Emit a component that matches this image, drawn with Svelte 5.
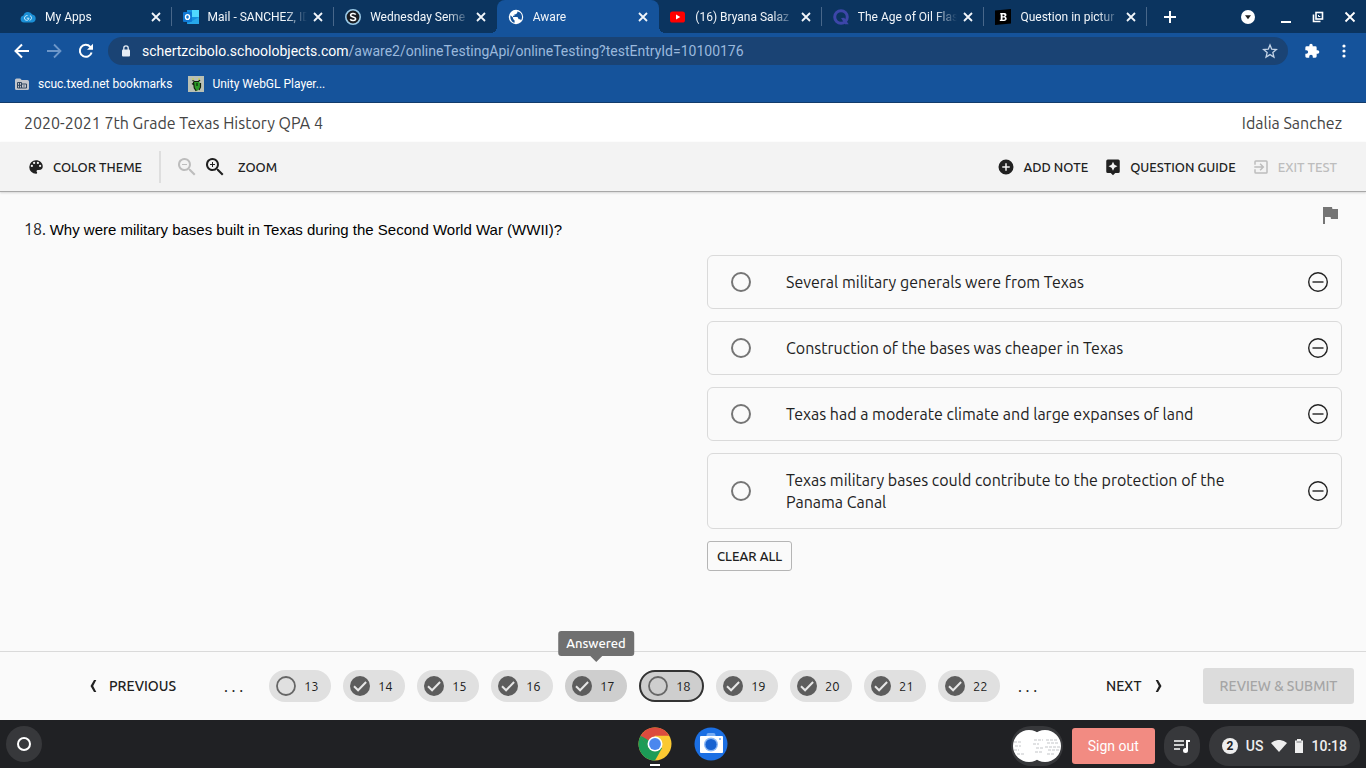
<script lang="ts">
  interface Tab {
    icon: string;
    title: string;
    active?: boolean;
  }

  const tabs: Tab[] = [
    { icon: 'cloud', title: 'My Apps' },
    { icon: 'outlook', title: 'Mail - SANCHEZ, ID' },
    { icon: 'schoology', title: 'Wednesday Seme' },
    { icon: 'globe', title: 'Aware', active: true },
    { icon: 'youtube', title: '(16) Bryana Salaz' },
    { icon: 'quizlet', title: 'The Age of Oil Flas' },
    { icon: 'brainly', title: 'Question in pictur' },
  ];

  const options = [
    'Several military generals were from Texas',
    'Construction of the bases was cheaper in Texas',
    'Texas had a moderate climate and large expanses of land',
    'Texas military bases could contribute to the protection of the Panama Canal',
  ];

  const questions = [13, 14, 15, 16, 17, 18, 19, 20, 21, 22];
  const unanswered = [13, 18];
  const hovered = 17;

  let current = $state(18);
  let answer = $state('');
</script>

<div class="screen">
  <header class="browser">
    <div class="tab-strip">
      <div class="tabs">
        {#each tabs as tab}
          <div class="tab" class:active={tab.active}>
            <svg class="favicon" viewBox="0 0 16 16" aria-hidden="true">
              {#if tab.icon === 'cloud'}
                <path d="M4 13.500a3.600 3.600 0 0 1-.6-7.100A4.800 4.800 0 0 1 12.300 5.600a4 4 0 0 1 0 7.900z" fill="#1b8fd6" />
                <path d="M7.500 6.500c-2 0-3 1.300-3 2.600s.9 2.200 2.200 2.200 2-.8 2.200-1.800M6.800 9.200h2.400M9.600 11.300c2.400-.5 2.600-4.400.3-4.400" fill="none" stroke="#d5efff" stroke-width="1" />
              {:else if tab.icon === 'outlook'}
                <rect x="4" y="1" width="12" height="14" fill="#1490df" />
                <rect x="9" y="1" width="7" height="7" fill="#50d9ff" />
                <path d="M4 15h12V8z" fill="#28a8ea" />
                <rect x="0" y="3" width="9" height="10" rx="1" fill="#0f78d4" />
                <ellipse cx="4.500" cy="8" rx="2" ry="2.400" fill="none" stroke="#fff" stroke-width="1.400" />
              {:else if tab.icon === 'schoology'}
                <circle cx="8" cy="8" r="7.200" fill="#1a1d22" stroke="#9bcbe9" stroke-width="1.600" />
                <path d="M10.700 5.600C9.600 3.800 5.600 4.200 5.600 6.200c0 2.100 5 1.400 5 3.600 0 2.200-4 2.300-5.400.5" fill="none" stroke="#fff" stroke-width="1.600" />
              {:else if tab.icon === 'globe'}
                <circle cx="8" cy="8" r="7.200" fill="#fff" />
                <path d="M2.500 6.200l2.600 2.600v1.300l1.500 1.300v2.400C3.800 13.200 1.800 10 2.500 6.200zM9.300 2.400v1.400L8 5.200H6.500v1.500H5v1.400h4.500l1.200 2.200h1.500l.8 1.200c1.400-2 1.500-5.600-.4-7.500-.8-.9-2-1.500-3.300-1.600z" fill="#15539b" />
              {:else if tab.icon === 'youtube'}
                <rect x="0" y="2.500" width="15" height="11" rx="2.600" fill="#f00" />
                <path d="M6 5.500v5L10.300 8z" fill="#fff" />
              {:else if tab.icon === 'quizlet'}
                <circle cx="8" cy="8" r="6.300" fill="none" stroke="#3d46a9" stroke-width="3" />
                <path d="M8 9l3.200-.2 4.500 6.500h-3.700z" fill="#3d46a9" />
              {:else}
                <path d="M0 1.500L16 0v14.500L0 16z" fill="#000" />
                <path d="M5.500 4h4c2.600 0 2.500 3.300.5 3.800 2.500.4 2.300 4.200-.8 4.200H4.800v-1.300h.9V5.300h-.9zM7.500 5.400v1.800h1.300c1 0 1-1.800 0-1.800zM7.500 8.600v2.100h1.600c1.100 0 1.100-2.100 0-2.100z" fill="#fff" />
              {/if}
            </svg>
            <span class="tab-title">{tab.title}</span>
            <button class="tab-close" aria-label="Close tab">
              <svg width="10" height="10" viewBox="0 0 10 10"><path d="M1 1l8 8M9 1L1 9" stroke="currentColor" stroke-width="1.800" /></svg>
            </button>
          </div>
        {/each}
      </div>
      <div class="window-controls">
        <button class="new-tab" aria-label="New tab">
          <svg width="12" height="12" viewBox="0 0 12 12"><path d="M6 0v12M0 6h12" stroke="currentColor" stroke-width="2" /></svg>
        </button>
        <button aria-label="Search tabs">
          <svg width="14" height="14" viewBox="0 0 14 14"><circle cx="7" cy="7" r="7" fill="#fff" /><path d="M4 5.200h6L7 9.300z" fill="#202020" /></svg>
        </button>
        <button aria-label="Minimize">
          <svg width="12" height="12" viewBox="0 0 12 12"><path d="M1 11h10" stroke="currentColor" stroke-width="2" /></svg>
        </button>
        <button aria-label="Restore">
          <svg width="12" height="12" viewBox="0 0 12 12" fill="none" stroke="currentColor" stroke-width="1.600"><rect x="4" y="1.500" width="6.500" height="6.500" /><path d="M1.500 3.500v7h7" /><path d="M6.500 4v1.500H8.300" stroke-width="1" /></svg>
        </button>
        <button aria-label="Close window">
          <svg width="12" height="12" viewBox="0 0 12 12"><path d="M1.500 1.500l9 9M10.500 1.500l-9 9" stroke="currentColor" stroke-width="1.800" /></svg>
        </button>
      </div>
    </div>

    <div class="address-row">
      <button aria-label="Back">
        <svg width="16" height="16" viewBox="0 0 16 16"><path d="M15 8H2M8 1.500L1.500 8 8 14.500" fill="none" stroke="#fff" stroke-width="2" /></svg>
      </button>
      <button aria-label="Forward" disabled>
        <svg width="16" height="16" viewBox="0 0 16 16"><path d="M1 8h13M8 1.500L14.500 8 8 14.500" fill="none" stroke="#6d97c9" stroke-width="1.800" /></svg>
      </button>
      <button aria-label="Reload">
        <svg width="16" height="16" viewBox="0 0 16 16"><path d="M13.600 9.500A6 6 0 1 1 12.300 3.800L14 5.500" fill="none" stroke="#fff" stroke-width="2" /><path d="M15 .8v6H9z" fill="#fff" /></svg>
      </button>
      <div class="address">
        <svg width="10" height="12" viewBox="0 0 10 12" aria-hidden="true"><rect x="1" y="4.500" width="8" height="7" rx="1" fill="#e6edf5" /><path d="M2.800 5V3a2.200 2.200 0 0 1 4.400 0v2" fill="none" stroke="#e6edf5" stroke-width="1.300" /></svg>
        <a class="url" href="#test">schertzcibolo.schoolobjects.com<span>/aware2/onlineTestingApi/onlineTesting?testEntryId=10100176</span></a>
        <button aria-label="Bookmark this page">
          <svg width="16" height="16" viewBox="0 0 24 24"><path d="M12 3l2.600 6.200 6.900.6-5.200 4.500 1.600 6.700-5.900-3.600L6.100 21l1.600-6.700L2.500 9.800l6.900-.6z" fill="none" stroke="#c3d3e6" stroke-width="2" /></svg>
        </button>
      </div>
      <button aria-label="Extensions">
        <svg width="16" height="16" viewBox="0 0 24 24"><path d="M20.500 11H19V7a2 2 0 0 0-2-2h-4V3.500a2.500 2.500 0 0 0-5 0V5H4a2 2 0 0 0-2 2v3.800h1.500a2.700 2.700 0 0 1 0 5.400H2V20a2 2 0 0 0 2 2h3.800v-1.500a2.700 2.700 0 0 1 5.400 0V22H17a2 2 0 0 0 2-2v-4h1.500a2.500 2.500 0 0 0 0-5z" fill="#fff" /></svg>
      </button>
      <button aria-label="Browser menu">
        <svg width="16" height="16" viewBox="0 0 16 16" fill="#fff"><circle cx="8" cy="3" r="1.600" /><circle cx="8" cy="8" r="1.600" /><circle cx="8" cy="13" r="1.600" /></svg>
      </button>
    </div>

    <nav class="bookmarks" aria-label="Bookmarks">
      <a href="#bookmarks">
        <svg width="16" height="16" viewBox="0 0 16 16" aria-hidden="true"><path d="M1 4a1.500 1.500 0 0 1 1.500-1.500h3.700L7.700 4h5.800A1.500 1.500 0 0 1 15 5.500v7a1.500 1.500 0 0 1-1.500 1.500h-11A1.500 1.500 0 0 1 1 12.500z" fill="#c2c6cc" /><path d="M3.500 6.500h4v5.500h-4zM7.500 8h5v4h-5zM3.500 9.300h4M5.500 6.500V12M10 9.300v1.400" fill="none" stroke="#31465f" stroke-width="1" /></svg>
        scuc.txed.net bookmarks
      </a>
      <a href="#unity">
        <svg width="16" height="16" viewBox="0 0 16 16" aria-hidden="true"><rect width="16" height="16" fill="#b9c0b4" /><path d="M6 5h4l2 2v4l-2 3.500H7.500L6 12z" fill="#2a9a27" /><path d="M4.500 4.500l2 1h4l1.500-1.500M5.500 6l.8 6 2 3M9 7v3M4 7.500l1.500 1M12.500 7v4l-1.500 3" fill="none" stroke="#10200c" stroke-width="1.200" /><path d="M5 2v2M11 2v2" stroke="#cbd43b" stroke-width="1" /></svg>
        Unity WebGL Player...
      </a>
    </nav>
  </header>

  <div class="title-bar">
    <h1>2020-2021 7th Grade Texas History QPA 4</h1>
    <span>Idalia Sanchez</span>
  </div>

  <div class="tools">
    <button class="tool">
      <svg width="18" height="18" viewBox="0 0 24 24" fill="currentColor"><path d="M12 3a9 9 0 0 0 0 18c.8 0 1.500-.7 1.500-1.500 0-.4-.2-.7-.4-1a1.500 1.500 0 0 1 1.100-2.500H16a5 5 0 0 0 5-5c0-4.400-4-8-9-8zm-5.500 9a1.500 1.500 0 1 1 0-3 1.500 1.500 0 0 1 0 3zm3-4a1.500 1.500 0 1 1 0-3 1.500 1.500 0 0 1 0 3zm5 0a1.500 1.500 0 1 1 0-3 1.500 1.500 0 0 1 0 3zm3 4a1.500 1.500 0 1 1 0-3 1.500 1.500 0 0 1 0 3z" /></svg>
      COLOR THEME
    </button>
    <div class="zoom">
      <button disabled aria-label="Zoom out">
        <svg width="24" height="24" viewBox="0 0 24 24" fill="currentColor"><path d="M15.500 14h-.8l-.3-.3A6.500 6.500 0 1 0 13.700 14.400l.3.300v.8l5 5 1.500-1.500zm-6 0a4.500 4.500 0 1 1 0-9 4.500 4.500 0 0 1 0 9zM7 9h5v1H7z" /></svg>
      </button>
      <button aria-label="Zoom in">
        <svg width="24" height="24" viewBox="0 0 24 24" fill="currentColor"><path d="M15.500 14h-.8l-.3-.3A6.500 6.500 0 1 0 13.700 14.400l.3.300v.8l5 5 1.500-1.500zm-6 0a4.500 4.500 0 1 1 0-9 4.500 4.500 0 0 1 0 9zM7 9h2V7h1v2h2v1h-2v2H9v-2H7z" /></svg>
      </button>
      <span>ZOOM</span>
    </div>
    <div class="tools-right">
      <button class="tool">
        <svg width="18" height="18" viewBox="0 0 24 24" fill="currentColor"><path d="M12 2a10 10 0 1 0 0 20 10 10 0 0 0 0-20zm5 11h-4v4h-2v-4H7v-2h4V7h2v4h4z" /></svg>
        ADD NOTE
      </button>
      <button class="tool">
        <svg width="18" height="18" viewBox="0 0 24 24" fill="currentColor"><path d="M19 2H5a2 2 0 0 0-2 2v14a2 2 0 0 0 2 2h4l3 3 3-3h4a2 2 0 0 0 2-2V4a2 2 0 0 0-2-2zm-5.100 10.900L12 17l-1.900-4.100L6 11l4.100-1.900L12 5l1.900 4.100L18 11z" /></svg>
        QUESTION GUIDE
      </button>
      <button class="tool" disabled>
        <svg width="18" height="18" viewBox="0 0 24 24" fill="currentColor"><path d="M10.100 15.600L11.500 17l5-5-5-5-1.400 1.400L12.700 11H3v2h9.700zM19 3H5a2 2 0 0 0-2 2v4h2V5h14v14H5v-4H3v4a2 2 0 0 0 2 2h14a2 2 0 0 0 2-2V5a2 2 0 0 0-2-2z" /></svg>
        EXIT TEST
      </button>
    </div>
  </div>

  <main>
    <p class="question" id="question">18. <span>Why were military bases built in Texas during the Second World War (WWII)?</span></p>
    <div class="answers">
      <button class="flag" aria-label="Flag question">
        <svg width="24" height="24" viewBox="0 0 24 24"><path d="M14.400 6L14 4H5v17h2v-7h5.600l.4 2h7V6z" fill="#757575" /></svg>
      </button>
      <div class="options" role="radiogroup" aria-labelledby="question">
        {#each options as option, i}
          <div class="option">
            <input type="radio" id="option-{i}" name="answer" value={option} bind:group={answer} />
            <label for="option-{i}">{option}</label>
            <button aria-label="Eliminate answer">
              <svg width="22" height="22" viewBox="0 0 22 22" fill="none" stroke="#222" stroke-width="1.400"><circle cx="11" cy="11" r="9.300" /><path d="M5.500 11h11" /></svg>
            </button>
          </div>
        {/each}
      </div>
      <button class="clear" onclick={() => (answer = '')}>CLEAR ALL</button>
    </div>
  </main>

  <footer>
    <button class="step previous">
      <svg width="8" height="14" viewBox="0 0 8 14"><path d="M5 1h2.300L4.200 7l3.100 6H5L1.500 7z" fill="currentColor" /></svg>
      PREVIOUS
    </button>
    <nav aria-label="Questions">
      <span class="dots">. . .</span>
      {#each questions as number}
        <button class="chip" class:current={number === current} class:hovered={number === hovered} onclick={() => (current = number)}>
          <svg width="22" height="22" viewBox="0 0 22 22" aria-hidden="true">
            {#if unanswered.includes(number)}
              <circle cx="11" cy="11" r="9" fill="none" stroke="#666" stroke-width="1.800" />
            {:else}
              <circle cx="11" cy="11" r="10" fill="#5d5d5d" />
              <path d="M5 11.200l4.100 4.100 8-8.300" fill="none" stroke="#e6e6e6" stroke-width="2" />
            {/if}
          </svg>
          {number}
          {#if number === hovered}
            <span class="tooltip" role="tooltip">Answered</span>
          {/if}
        </button>
      {/each}
      <span class="dots">. . .</span>
    </nav>
    <button class="step next">
      NEXT
      <svg width="8" height="14" viewBox="0 0 8 14"><path d="M3 1H.7l3.100 6-3.100 6H3l3.500-6z" fill="currentColor" /></svg>
    </button>
    <button class="submit" disabled>REVIEW &amp; SUBMIT</button>
  </footer>

  <div class="shelf">
    <button class="round launcher" aria-label="Launcher">
      <svg width="16" height="16" viewBox="0 0 16 16"><circle cx="8" cy="8" r="6" fill="none" stroke="#fff" stroke-width="2" /></svg>
    </button>
    <div class="apps">
      <button class="running" aria-label="Chrome">
        <svg width="34" height="34" viewBox="0 0 34 34">
          <circle cx="17" cy="17" r="16.500" fill="#fbc932" />
          <path d="M17 17L2.700 8.800A16.500 16.500 0 0 0 17 33.500l7.100-12.400z" fill="#1c9c57" />
          <path d="M2.700 8.800A16.500 16.500 0 0 1 31.300 8.800H17L10 21z" fill="#dc4b3e" />
          <path d="M2.700 8.800l7.200 12.400L17 17z" fill="#1c9c57" />
          <circle cx="17" cy="17" r="7.500" fill="#fff" />
          <circle cx="17" cy="17" r="5.900" fill="#4b87ee" />
        </svg>
      </button>
      <button aria-label="Camera">
        <svg width="34" height="34" viewBox="0 0 34 34">
          <circle cx="17" cy="17" r="16.500" fill="#1b6fe3" />
          <rect x="12.500" y="6" width="9" height="5" rx="2" fill="#79adf4" />
          <rect x="6" y="9" width="23" height="17" rx="1" fill="#fff" />
          <circle cx="17" cy="17.500" r="7" fill="#8bb8f6" />
          <circle cx="17" cy="17.500" r="5.600" fill="#1762d1" />
          <circle cx="26" cy="12" r="1" fill="#70a5ef" />
        </svg>
      </button>
    </div>
    <div class="tray">
      <button class="preview" aria-label="Recent files">
        <svg width="52" height="40" viewBox="0 0 52 40">
          <rect width="52" height="40" rx="20" fill="#37383b" />
          <circle cx="18" cy="20" r="16" fill="#fff" /><circle cx="34" cy="20" r="16" fill="#fff" />
          <path d="M3 16h7M4 20h6M3 24h5M6 28h7M23 14h9M22 18h6M25 22h7M24 26h7M35 14h11M36 17h12M34 21h15M37 24h11M36 28h8" stroke="#c3c5c8" stroke-width="1" stroke-dasharray="3 1" />
        </svg>
      </button>
      <button class="sign-out">Sign out</button>
      <button class="round media" aria-label="Media controls">
        <svg width="20" height="20" viewBox="0 0 20 20"><path d="M2 5h10M2 9h10M2 13h6" stroke="#fff" stroke-width="1.600" /><path d="M15 15V5h3" fill="none" stroke="#fff" stroke-width="2" /><circle cx="13.500" cy="14.500" r="2.500" fill="#fff" /></svg>
      </button>
      <button class="status">
        <span class="count">2</span>
        <span>US</span>
        <svg width="16" height="12" viewBox="0 0 16 12" aria-hidden="true"><path d="M0 3a12 12 0 0 1 16 0L8 12z" fill="#eee" /></svg>
        <svg width="8" height="14" viewBox="0 0 8 14" aria-hidden="true"><path d="M2 0h4v1.500h2V14H0V1.500h2z" fill="#eee" /><path d="M1.500 3h5" stroke="#77797c" stroke-width="1" /></svg>
        <span>10:18</span>
      </button>
    </div>
  </div>
</div>

<style>
  :global(body) { margin: 0; }
  * { box-sizing: border-box; }
  button {
    display: flex; align-items: center; justify-content: center;
    padding: 0; border: 0; background: none; color: inherit; font: inherit; white-space: nowrap;
  }
  svg { display: block; flex-shrink: 0; }
  a { color: inherit; text-decoration: none; }

  .screen {
    min-height: 100vh; display: flex; flex-direction: column;
    background: #fafafa; color: #212121; font: 16px/22px Ubuntu, "Noto Sans", sans-serif;
  }

  .browser { background: #15539b; color: #fff; border-bottom: 1px solid #123b6b; font: 12px/16px Roboto, sans-serif; }
  .tab-strip { display: flex; height: 33px; background: #0b345f; }
  .tabs { flex: 1; min-width: 0; display: grid; grid-template-columns: repeat(7, 1fr); padding-left: 9px; }
  .tab {
    position: relative; display: flex; align-items: center; min-width: 0;
    padding: 0 11px; color: #f2f6fa;
  }
  .tab:not(.active):not(:has(+ .active))::before {
    content: ''; position: absolute; right: 0; top: 7px; width: 1px; height: 19px; background: #48678a;
  }
  .tab.active { background: #15539b; border-radius: 8px 8px 0 0; }
  .tab.active::before, .tab.active::after {
    content: ''; position: absolute; bottom: 0; width: 6px; height: 6px;
  }
  .tab.active::before { left: -6px; background: radial-gradient(circle at 0 0, #0b345f 6px, #15539b 6px); }
  .tab.active::after { right: -6px; background: radial-gradient(circle at 100% 0, #0b345f 6px, #15539b 6px); }
  .favicon { width: 16px; height: 16px; margin-right: 9px; }
  .tab-title {
    flex: 1; min-width: 0; white-space: nowrap;
    mask-image: linear-gradient(to right, #000 76%, transparent 98%);
  }
  .tab-close { margin-left: 4px; }
  .window-controls { width: 219px; flex-shrink: 0; display: flex; align-items: center; gap: 20px; padding: 0 10px 0 17px; }
  .new-tab { margin-right: auto; }
  .new-tab + button { margin-right: 5px; }

  .address-row { display: flex; align-items: center; gap: 16px; height: 36px; padding: 0 14px; }
  .address {
    flex: 1; min-width: 0; display: flex; align-items: center; gap: 11px; height: 28px; margin-left: -2px;
    padding: 0 10px 0 13px; border-radius: 14px; background: #1a4374; font-size: 14px;
  }
  .url { flex: 1; min-width: 0; overflow: hidden; white-space: nowrap; }
  .url span { color: #9ab9dd; }
  .bookmarks { display: flex; align-items: center; gap: 16px; height: 33px; padding: 0 14px 3px; }
  .bookmarks a { display: flex; align-items: center; gap: 8px; }

  .title-bar {
    display: flex; align-items: center; justify-content: space-between;
    height: 39px; padding: 0 24px; background: #fff; color: #444;
  }
  h1 { margin: 0; font-size: inherit; font-weight: 400; }
  .tools {
    display: flex; align-items: center; height: 50px; padding: 0 29px 0 27px;
    background: #f3f3f3; border-bottom: 1px solid #a8a8a8; box-shadow: 0 1px 2px #d5d5d5;
    font-size: 13px; font-weight: 500;
  }
  .tool { gap: 8px; }
  .tools button:disabled { color: #bdbdbd; }
  .zoom { display: flex; align-items: center; gap: 4px; margin-left: 17px; padding-left: 14px; border-left: 2px solid #dedede; height: 32px; }
  .zoom span { margin-left: 7px; }
  .tools-right { display: flex; gap: 16px; margin-left: auto; }

  main { flex: 1; display: grid; grid-template-columns: 1fr 1fr; gap: 48px; padding: 11px 24px 24px; }
  .question { margin: 0; padding-top: 15px; }
  .question span { font: 15px/22px "Liberation Sans", Arial, sans-serif; color: #000; }
  .answers { display: flex; flex-direction: column; align-items: flex-start; }
  .flag { align-self: flex-end; margin-bottom: 28px; }
  .options { display: grid; gap: 12px; width: 100%; }
  .option { display: flex; align-items: center; padding: 15px 12px 15px 23px; border: 1px solid #dadada; border-radius: 6px; }
  .option input { appearance: none; flex-shrink: 0; width: 20px; height: 20px; margin: 0 35px 0 0; border: 2px solid #757575; border-radius: 50%; }
  .option input:checked { background: radial-gradient(#757575 5px, transparent 6px); }
  .option label { flex: 1; margin-right: 40px; }
  .clear { height: 30px; margin-top: 12px; padding: 0 9px; border: 1px solid #b5b5b5; border-radius: 3px; font-size: 13px; font-weight: 500; }

  footer { display: flex; align-items: center; height: 69px; padding-right: 12px; border-top: 1px solid #dadada; }
  .step { gap: 12px; font-size: 14px; font-weight: 500; }
  .previous { width: 224px; padding-right: 48px; justify-content: flex-end; }
  .next { width: 57px; margin-left: auto; margin-right: 40px; justify-content: space-between; }
  footer nav { display: flex; align-items: center; gap: 12px; }
  .dots { width: 33px; }
  .dots:last-child { padding-left: 6px; }
  .chip {
    position: relative; width: 62px; height: 32px; gap: 7px; padding-left: 6px; justify-content: flex-start;
    border-radius: 16px; background: #e0e0e0; font-size: 13px;
  }
  .chip.hovered { background: #cecece; }
  .chip.current { width: 65px; border: 2px solid #333; background: #cecece; }
  .tooltip {
    position: absolute; left: 50%; bottom: 46px; transform: translateX(-50%);
    padding: 2px 8px; border-radius: 3px; background: #707070; color: #fff; font-size: 13px; line-height: 21px; font-weight: 500;
  }
  .tooltip::after {
    content: ''; position: absolute; left: 50%; top: 100%; margin-left: -6px;
    border: 6px solid transparent; border-top-color: #707070;
  }
  .submit { height: 36px; width: 151px; border-radius: 3px; background: #dcdcdc; color: #a5a5a5; font-size: 14px; font-weight: 500; }

  .shelf {
    display: grid; grid-template-columns: 1fr auto 1fr; align-items: center;
    height: 48px; padding: 0 6px; background: #202124; color: #eee; font: 14px/20px Roboto, sans-serif;
  }
  .round { width: 36px; height: 36px; border-radius: 18px; background: #37383b; }
  .round.media { height: 40px; }
  .apps { display: flex; gap: 22px; }
  .apps button { position: relative; }
  .running::after { content: ''; position: absolute; bottom: -5px; width: 10px; height: 2px; background: #fff; }
  .tray { display: flex; align-items: center; justify-content: flex-end; gap: 9px; padding-top: 4px; }
  .sign-out { height: 36px; padding: 0 16px; border-radius: 3px; background: #f28b82; color: #fff; }
  .status { gap: 8px; height: 40px; padding: 0 13px; border-radius: 20px; background: #37383b; font-weight: 500; }
  .count { width: 16px; border-radius: 8px; background: #eee; color: #202124; font-size: 12px; line-height: 16px; font-weight: 700; }
</style>
